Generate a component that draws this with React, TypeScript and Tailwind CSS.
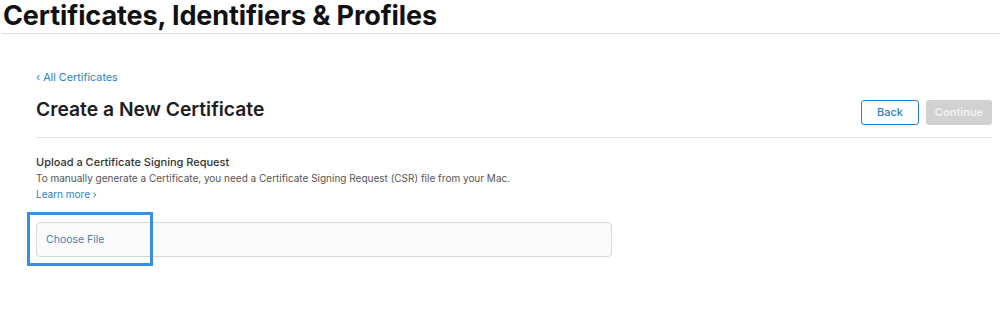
import React from "react";

export default function App() {
  return (
    <div className="w-[1000px] h-[313px] bg-white overflow-hidden" style={{ fontFamily: "Inter, 'Noto Sans', sans-serif" }}>
      <div className="pl-[3px] pt-[1px]">
        <h1 className="text-[27px] leading-[30px] font-bold text-[#111] tracking-[-0.1px]">Certificates, Identifiers &amp; Profiles</h1>
      </div>
      <div className="ml-[2px] mt-[2px] h-px bg-[#dedede]" />
      <div className="pl-[36px] pr-[8px]">
        <div className="mt-[37px] text-[10.8px] leading-[14px] text-[#2d7fc7]">
          <span className="mr-[3px]">‹</span>All Certificates
        </div>
        <div className="mt-[14px] flex items-start justify-between">
          <h2 className="text-[19.3px] leading-[24px] font-semibold text-[#1d1d1f] mt-[-2px]">Create a New Certificate</h2>
          <div className="flex gap-[7px] mt-[1px]">
            <button className="w-[58px] h-[25px] rounded-[3px] border border-[#2d7fc7] text-[11px] font-medium text-[#2d7fc7] bg-white">Back</button>
            <button className="w-[66px] h-[25px] rounded-[3px] bg-[#d1d1d1] text-[11px] font-semibold text-[#f2f2f2]">Continue</button>
          </div>
        </div>
        <div className="mt-[12px] h-px bg-[#e3e3e3]" />
        <div className="mt-[16px] text-[11px] leading-[16px] font-medium text-[#333]">Upload a Certificate Signing Request</div>
        <div className="text-[10px] leading-[16px] text-[#555]">To manually generate a Certificate, you need a Certificate Signing Request (CSR) file from your Mac.</div>
        <div className="text-[10px] leading-[16px] text-[#2d7fc7]">Learn more ›</div>
      </div>
      <div className="ml-[27px] mt-[10px] relative w-[585px] h-[54px]">
        <div className="absolute left-[9px] top-[10px] w-[576px] h-[35px] rounded-[4px] border border-[#d7d7d7] bg-[#fafafa] flex items-center pl-[9px] text-[10.5px] text-[#4d7fb5]">Choose File</div>
        <div className="absolute left-0 top-0 w-[126px] h-[54px] border-[3px] border-[#3a8ee0]" />
      </div>
    </div>
  );
}
